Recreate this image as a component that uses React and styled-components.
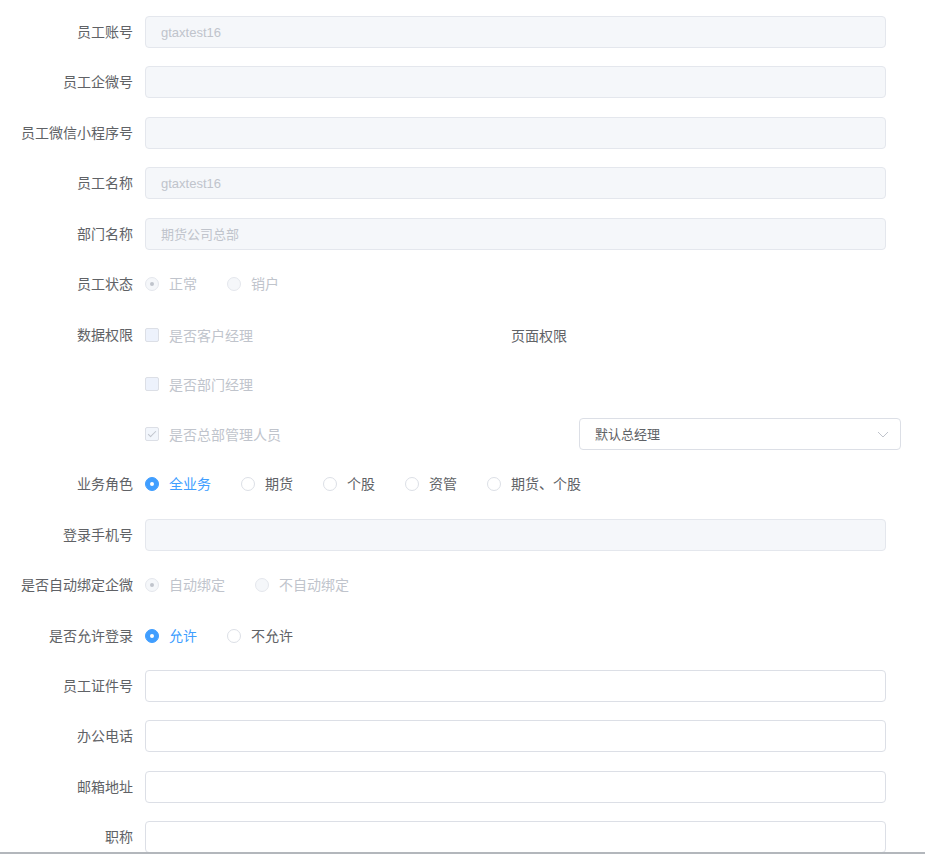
import React from 'react';
import styled, { createGlobalStyle, css } from 'styled-components';

const GlobalStyle = createGlobalStyle`
  html, body {
    margin: 0;
    padding: 0;
    background: #fff;
  }
  body {
    font-family: "Liberation Sans", "Noto Sans CJK SC", sans-serif;
    font-size: 14px;
    color: #606266;
  }
`;

const Page = styled.div`
  height: 854px;
  box-sizing: border-box;
  overflow: hidden;
  border-bottom: 2px solid #b3b7bc;
`;

const Form = styled.form`
  width: 886px;
  padding-top: 16px;
`;

const FormItem = styled.div`
  display: flex;
  align-items: flex-start;
  margin-bottom: 18.44px;
`;

const Label = styled.label`
  flex: 0 0 145px;
  box-sizing: border-box;
  padding-right: 12px;
  text-align: right;
  line-height: 32px;
  font-size: 14px;
  color: #606266;
  white-space: nowrap;
`;

const Content = styled.div`
  flex: 1;
  min-width: 0;
  display: flex;
  align-items: center;
  min-height: 32px;
`;

const Input = styled.input`
  width: 100%;
  height: 32px;
  box-sizing: border-box;
  padding: 0 15px;
  border-radius: 4px;
  outline: none;
  font-family: inherit;
  font-size: 13px;
  border: 1px solid ${p => (p.disabled ? '#e4e7ed' : '#dcdfe6')};
  background: ${p => (p.disabled ? '#f5f7fa' : '#fff')};
  color: ${p => (p.disabled ? '#c0c4cc' : '#606266')};
  &:disabled {
    -webkit-text-fill-color: #c0c4cc;
  }
`;

const RadioGroup = styled.div`
  display: flex;
  align-items: center;
  height: 32px;
`;

const RadioItem = styled.span`
  display: inline-flex;
  align-items: center;
  margin-right: 30px;
  font-size: 14px;
  line-height: 1;
  color: ${p => (p.disabled ? '#c0c4cc' : p.checked ? '#409eff' : '#606266')};
`;

const RadioCircle = styled.span`
  position: relative;
  width: 14px;
  height: 14px;
  box-sizing: border-box;
  border-radius: 50%;
  margin-right: 10px;
  border: 1px solid #dcdfe6;
  background: #fff;
  ${p => p.disabled && css`
    border-color: #e4e7ed;
    background: #f5f7fa;
  `}
  ${p => p.checked && !p.disabled && css`
    border-color: #409eff;
    background: #409eff;
  `}
  &::after {
    content: '';
    display: ${p => (p.checked ? 'block' : 'none')};
    position: absolute;
    left: 50%;
    top: 50%;
    width: 4px;
    height: 4px;
    border-radius: 50%;
    transform: translate(-50%, -50%);
    background: ${p => (p.disabled ? '#c0c4cc' : '#fff')};
  }
`;

const CheckItem = styled.span`
  display: inline-flex;
  align-items: center;
  height: 32px;
  font-size: 14px;
  color: ${p => (p.disabled ? '#c0c4cc' : '#606266')};
`;

const CheckBox = styled.span`
  position: relative;
  width: 14px;
  height: 14px;
  box-sizing: border-box;
  border-radius: 2px;
  margin-right: 10px;
  border: 1px solid #dcdfe6;
  background: ${p => (p.checked ? '#f2f6fc' : '#edf2fc')};
  &::after {
    content: '';
    display: ${p => (p.checked ? 'block' : 'none')};
    position: absolute;
    left: 4px;
    top: 1px;
    width: 3px;
    height: 7px;
    border: 1px solid #c0c4cc;
    border-left: 0;
    border-top: 0;
    transform: rotate(45deg);
  }
`;

const PermGrid = styled.div`
  display: grid;
  grid-template-columns: 354px 56px 322px;
  grid-auto-rows: 32px;
  column-gap: 12px;
  row-gap: 17.6px;
  align-items: center;
`;

const SideLabel = styled.span`
  font-size: 14px;
  color: #606266;
  text-align: right;
  white-space: nowrap;
`;

const Select = styled.div`
  display: flex;
  align-items: center;
  justify-content: space-between;
  height: 32px;
  box-sizing: border-box;
  padding: 0 10px 0 15px;
  border: 1px solid #dcdfe6;
  border-radius: 4px;
  background: #fff;
  font-size: 13px;
  color: #606266;
`;

const Radios = ({ options, value, disabled }) => (
  <RadioGroup>
    {options.map(o => (
      <RadioItem key={o} checked={o === value} disabled={disabled}>
        <RadioCircle checked={o === value} disabled={disabled} />
        {o}
      </RadioItem>
    ))}
  </RadioGroup>
);

const Check = ({ children, checked }) => (
  <CheckItem disabled>
    <CheckBox checked={checked} />
    {children}
  </CheckItem>
);

const Arrow = () => (
  <svg width="14" height="14" viewBox="0 0 14 14">
    <polyline points="2,5 7,10 12,5" fill="none" stroke="#c0c4cc" strokeWidth="1" />
  </svg>
);

const TextRow = ({ label, value = '', disabled }) => (
  <FormItem>
    <Label>{label}</Label>
    <Content>
      <Input disabled={disabled} value={value} readOnly />
    </Content>
  </FormItem>
);

export default function App() {
  return (
    <Page>
      <GlobalStyle />
      <Form>
        <TextRow label="员工账号" value="gtaxtest16" disabled />
        <TextRow label="员工企微号" disabled />
        <TextRow label="员工微信小程序号" disabled />
        <TextRow label="员工名称" value="gtaxtest16" disabled />
        <TextRow label="部门名称" value="期货公司总部" disabled />

        <FormItem>
          <Label>员工状态</Label>
          <Content>
            <Radios options={['正常', '销户']} value="正常" disabled />
          </Content>
        </FormItem>

        <FormItem>
          <Label>数据权限</Label>
          <Content>
            <PermGrid>
              <Check>是否客户经理</Check>
              <SideLabel>页面权限</SideLabel>
              <span />
              <Check>是否部门经理</Check>
              <span />
              <span />
              <Check checked>是否总部管理人员</Check>
              <span />
              <Select>
                默认总经理
                <Arrow />
              </Select>
            </PermGrid>
          </Content>
        </FormItem>

        <FormItem>
          <Label>业务角色</Label>
          <Content>
            <Radios options={['全业务', '期货', '个股', '资管', '期货、个股']} value="全业务" />
          </Content>
        </FormItem>

        <TextRow label="登录手机号" disabled />

        <FormItem>
          <Label>是否自动绑定企微</Label>
          <Content>
            <Radios options={['自动绑定', '不自动绑定']} value="自动绑定" disabled />
          </Content>
        </FormItem>

        <FormItem>
          <Label>是否允许登录</Label>
          <Content>
            <Radios options={['允许', '不允许']} value="允许" />
          </Content>
        </FormItem>

        <TextRow label="员工证件号" />
        <TextRow label="办公电话" />
        <TextRow label="邮箱地址" />
        <TextRow label="职称" />
      </Form>
    </Page>
  );
}
